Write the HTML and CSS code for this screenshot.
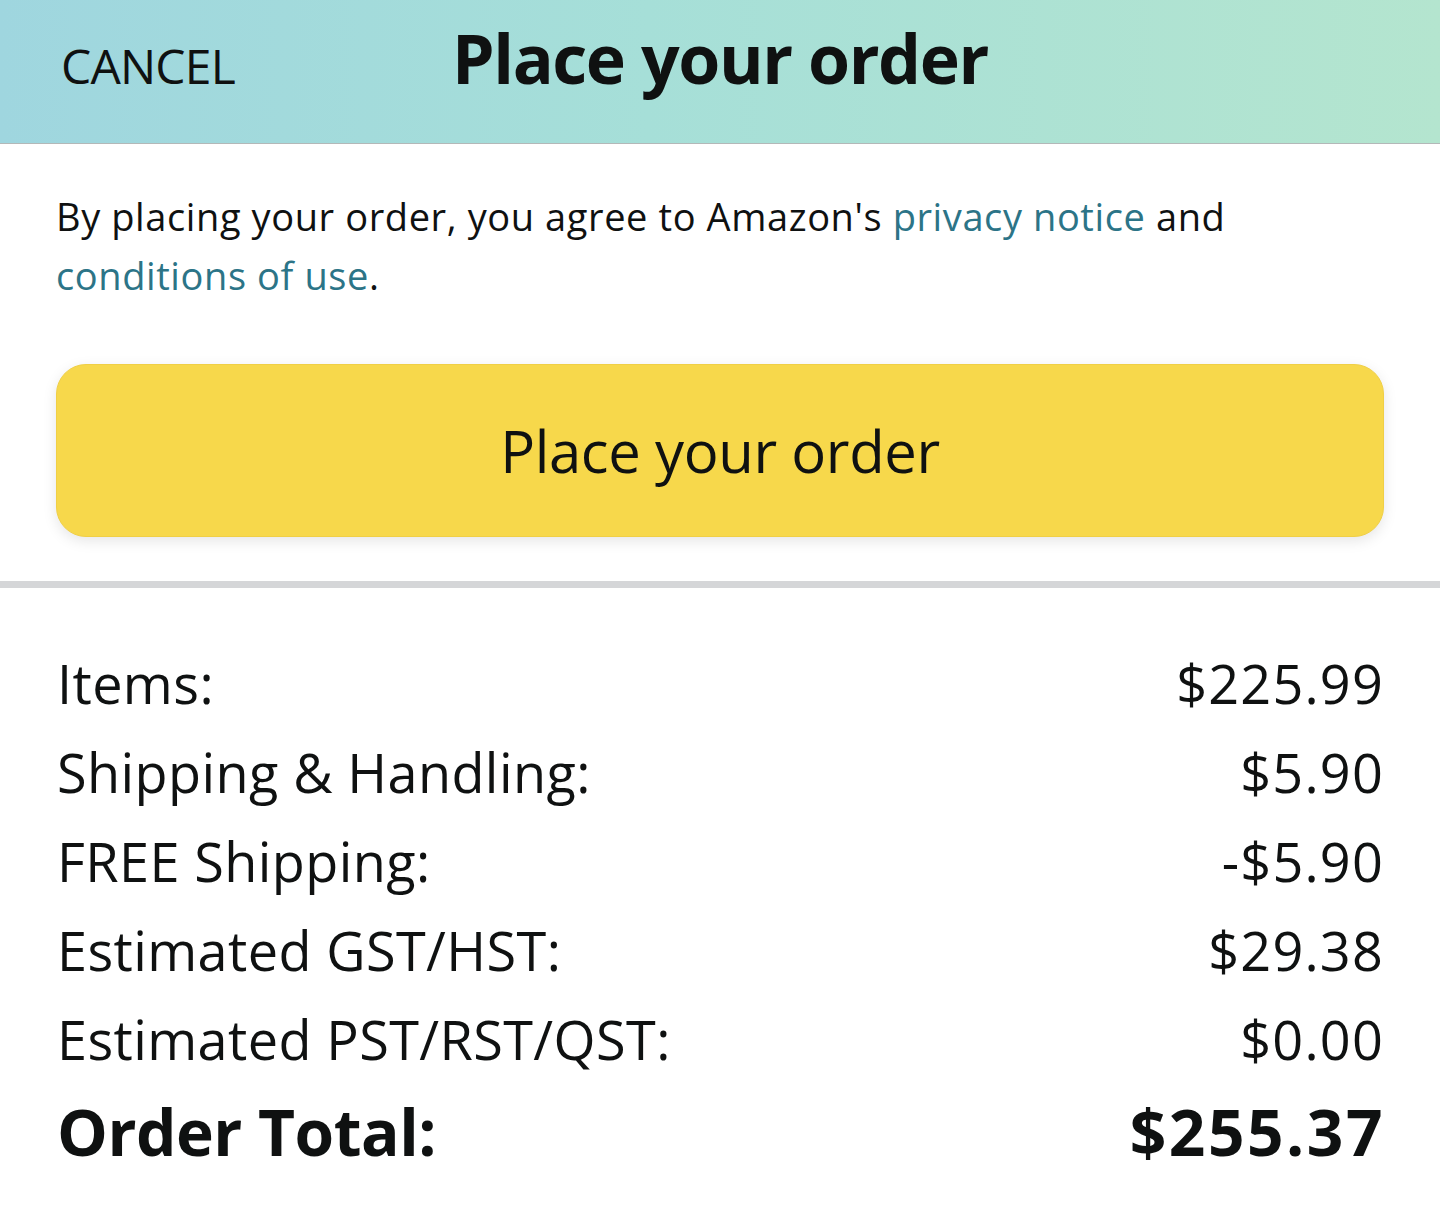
FILE: index.html
```html
<!DOCTYPE html>
<html lang="en">
<head>
<meta charset="utf-8">
<title>Place your order</title>
<link rel="stylesheet" href="styles.css">
</head>
<body>
<header class="topbar">
  <div class="topbar-left"><a class="cancel" href="#">CANCEL</a></div>
  <h1 class="topbar-title">Place your order</h1>
  <div class="topbar-right"></div>
</header>
<main class="content">
  <p class="notice">By placing your order, you agree to Amazon's <a class="link" href="#">privacy notice</a> and <a class="link" href="#">conditions of use</a>.</p>
  <button class="place-btn" type="button">Place your order</button>
</main>
<div class="divider"></div>
<section class="summary">
  <div class="row"><span class="label">Items:</span><span class="value">$225.99</span></div>
  <div class="row"><span class="label">Shipping &amp; Handling:</span><span class="value">$5.90</span></div>
  <div class="row"><span class="label">FREE Shipping:</span><span class="value">-$5.90</span></div>
  <div class="row"><span class="label">Estimated GST/HST:</span><span class="value">$29.38</span></div>
  <div class="row"><span class="label">Estimated PST/RST/QST:</span><span class="value">$0.00</span></div>
  <div class="row total"><span class="label">Order Total:</span><span class="value">$255.37</span></div>
</section>
</body>
</html>
```
FILE: styles.css
```css
* { box-sizing: border-box; }
html, body { margin: 0; padding: 0; background: #ffffff; }
body {
  font-family: "Open Sans", "Noto Sans", sans-serif;
  color: #0f1111;
  width: 1440px;
}
.topbar {
  height: 144px;
  display: grid;
  grid-template-columns: 1fr auto 1fr;
  align-items: baseline;
  padding-top: 11px;
  background: linear-gradient(90deg, #9fd6df 0%, #a6dfd8 45%, #b4e5cf 100%);
  border-bottom: 1px solid #b3b8b8;
}
.topbar-left { padding-left: 61px; }
.cancel {
  color: #0f1111;
  text-decoration: none;
  font-size: 48px;
  letter-spacing: -0.8px;
}
.topbar-title {
  margin: 0;
  font-size: 68px;
  font-weight: 700;
  letter-spacing: -1.4px;
  color: #0f1111;
}
.content { padding: 0 56px; }
.notice {
  margin: 43px 0 0;
  font-size: 38px;
  line-height: 59px;
  letter-spacing: 0.6px;
}
.link { color: #2c7487; text-decoration: none; }
.place-btn {
  display: block;
  width: 100%;
  height: 173px;
  margin-top: 59px;
  border: 1px solid #f0cf45;
  border-radius: 30px;
  background: #f7d84b;
  box-shadow: 0 4px 14px rgba(0,0,0,0.10);
  font-family: inherit;
  font-size: 58px;
  color: #0f1111;
  letter-spacing: -0.4px;
  padding: 0;
}
.divider {
  height: 7px;
  background: #d5d6d8;
  margin-top: 44px;
}
.summary {
  padding: 51px 57px 0 57px;
  display: flex;
  flex-direction: column;
}
.row {
  display: flex;
  justify-content: space-between;
  align-items: baseline;
  font-size: 54px;
  line-height: 89px;
}
.row .label { letter-spacing: 0.4px; }
.row .value { letter-spacing: 1.2px; margin-right: -1px; }
.row.total {
  font-weight: 700;
  font-size: 64px;
  line-height: 96px;
}
.row.total .label { letter-spacing: -0.5px; }
.row.total .value { letter-spacing: 2.5px; margin-right: -2px; }
```
